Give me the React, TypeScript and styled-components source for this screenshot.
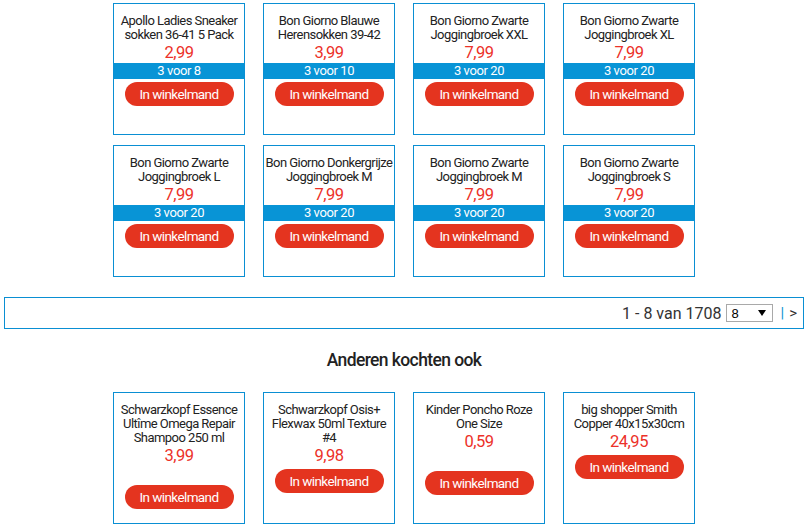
import React from "react";
import styled, { createGlobalStyle } from "styled-components";

const GlobalStyle = createGlobalStyle`
  html, body { margin: 0; padding: 0; background: #ffffff; }
  body { font-family: Roboto, "Liberation Sans", Arial, sans-serif; color: #222; }
`;

const BLUE = "#0a8fd3";
const RED = "#e4341f";
const PRICE_RED = "#ec3129";

type Product = {
  title: string;
  price: string;
  deal?: string;
  spacer?: boolean;
};

const products: Product[] = [
  { title: "Apollo Ladies Sneaker sokken 36-41 5 Pack", price: "2,99", deal: "3 voor 8" },
  { title: "Bon Giorno Blauwe Herensokken 39-42", price: "3,99", deal: "3 voor 10" },
  { title: "Bon Giorno Zwarte Joggingbroek XXL", price: "7,99", deal: "3 voor 20" },
  { title: "Bon Giorno Zwarte Joggingbroek XL", price: "7,99", deal: "3 voor 20" },
  { title: "Bon Giorno Zwarte Joggingbroek L", price: "7,99", deal: "3 voor 20" },
  { title: "Bon Giorno Donkergrijze Joggingbroek M", price: "7,99", deal: "3 voor 20" },
  { title: "Bon Giorno Zwarte Joggingbroek M", price: "7,99", deal: "3 voor 20" },
  { title: "Bon Giorno Zwarte Joggingbroek S", price: "7,99", deal: "3 voor 20" },
];

const others: Product[] = [
  { title: "Schwarzkopf Essence Ultîme Omega Repair Shampoo 250 ml", price: "3,99", spacer: true },
  { title: "Schwarzkopf Osis+ Flexwax 50ml Texture #4", price: "9,98" },
  { title: "Kinder Poncho Roze One Size", price: "0,59", spacer: true },
  { title: "big shopper Smith Copper 40x15x30cm", price: "24,95" },
];

const Page = styled.div`
  display: flex;
  flex-direction: column;
  padding: 3px 4px 0;
`;

const Grid = styled.div`
  display: grid;
  grid-template-columns: repeat(4, 132px);
  column-gap: 18px;
  row-gap: 10px;
  justify-content: center;
`;

const Card = styled.div`
  box-sizing: border-box;
  height: 132px;
  border: 1px solid ${BLUE};
  display: flex;
  flex-direction: column;
  align-items: center;
  padding-top: 10px;
`;

const Title = styled.div`
  font-size: 13px;
  letter-spacing: -0.55px;
  line-height: 14px;
  text-align: center;
  color: #222;
  padding: 0 1px;
`;

const Price = styled.div`
  font-size: 16.5px;
  letter-spacing: -0.5px;
  line-height: 21px;
  color: ${PRICE_RED};
`;

const DealBar = styled.div<{ $empty?: boolean }>`
  align-self: stretch;
  height: 16px;
  line-height: 16px;
  font-size: 13px;
  letter-spacing: -0.4px;
  text-align: center;
  color: #fff;
  background: ${(p) => (p.$empty ? "transparent" : "#0894d6")};
`;

const CartButton = styled.button`
  margin-top: 3px;
  width: 109px;
  height: 24px;
  border: none;
  border-radius: 12px;
  background: ${RED};
  color: #fff;
  font-family: Roboto, "Liberation Sans", Arial, sans-serif;
  font-size: 13.5px;
  letter-spacing: -0.6px;
  line-height: 24px;
  padding: 0;
  cursor: pointer;
`;

const Pagination = styled.div`
  box-sizing: border-box;
  margin-top: 20px;
  height: 32px;
  border: 1px solid ${BLUE};
  display: flex;
  align-items: center;
  justify-content: flex-end;
  padding-right: 6px;
  font-size: 16px;
  color: #333;
`;

const Count = styled.span`
  margin-right: 5px;
`;

const SelectBox = styled.div`
  box-sizing: border-box;
  width: 47px;
  height: 18px;
  border: 1px solid #a9a9a9;
  display: flex;
  align-items: center;
  justify-content: space-between;
  padding: 0 6px 0 4px;
  font-family: "Liberation Sans", Arial, sans-serif;
  font-size: 13px;
  color: #000;
  background: #fff;
`;

const Nav = styled.span`
  margin-left: 7px;
  font-size: 15px;
  display: flex;
  gap: 5px;
`;

const Bar = styled.span`
  color: ${BLUE};
`;

const Heading = styled.h2`
  margin: 20px 0 21px;
  font-size: 17.5px;
  letter-spacing: -0.6px;
  line-height: 22px;
  font-weight: 500;
  text-align: center;
  color: #222;
`;

function ProductCard({ p }: { p: Product }) {
  return (
    <Card>
      <Title>{p.title}</Title>
      <Price>{p.price}</Price>
      {p.deal ? <DealBar>{p.deal}</DealBar> : p.spacer ? <DealBar $empty /> : null}
      <CartButton>In winkelmand</CartButton>
    </Card>
  );
}

export default function App() {
  return (
    <>
      <GlobalStyle />
      <Page>
        <Grid>
          {products.map((p, i) => (
            <ProductCard key={i} p={p} />
          ))}
        </Grid>
        <Pagination>
          <Count>1 - 8 van 1708</Count>
          <SelectBox>
            <span>8</span>
            <svg width="8" height="6" viewBox="0 0 8 6">
              <path d="M0 0 L8 0 L4 6 Z" fill="#000" />
            </svg>
          </SelectBox>
          <Nav>
            <Bar>|</Bar>
            <span>&gt;</span>
          </Nav>
        </Pagination>
        <Heading>Anderen kochten ook</Heading>
        <Grid>
          {others.map((p, i) => (
            <ProductCard key={i} p={p} />
          ))}
        </Grid>
      </Page>
    </>
  );
}
